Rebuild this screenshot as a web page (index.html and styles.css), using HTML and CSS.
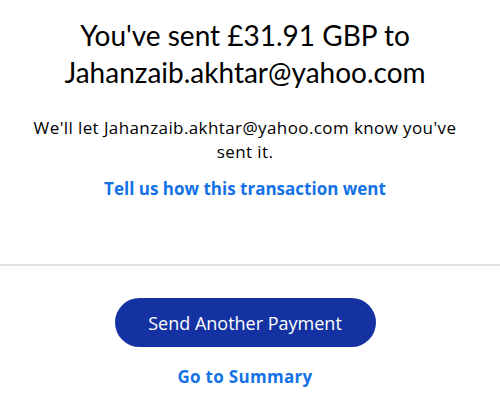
FILE: index.html
```html
<!DOCTYPE html>
<html lang="en">
<head>
<meta charset="utf-8">
<title>Payment sent</title>
<link rel="stylesheet" href="styles.css">
</head>
<body>
<main class="page">
  <section class="confirm">
    <h1 class="title">You've sent £31.91 GBP to Jahanzaib.akhtar@yahoo.com</h1>
    <p class="note">We'll let Jahanzaib.akhtar@yahoo.com know you've sent it.</p>
    <a class="link feedback" href="#">Tell us how this transaction went</a>
  </section>
  <hr class="divider">
  <section class="actions">
    <a class="btn-primary" href="#">Send Another Payment</a>
    <a class="link summary" href="#">Go to Summary</a>
  </section>
</main>
</body>
</html>
```

FILE: styles.css
```css
html, body {
  margin: 0;
  padding: 0;
  background: #ffffff;
}
body {
  font-family: "Open Sans", "Noto Sans", sans-serif;
  color: #000000;
}
.page {
  display: flex;
  flex-direction: column;
}
.confirm {
  display: flex;
  flex-direction: column;
  align-items: center;
  text-align: center;
  padding: 17px 35px 0 25px;
}
.title {
  margin: 0;
  font-family: Lato, "Noto Sans", sans-serif;
  font-size: 28px;
  font-weight: 400;
  line-height: 37px;
  max-width: 440px;
}
.note {
  margin: 25px 0 0;
  font-size: 17px;
  letter-spacing: 0.4px;
  line-height: 24px;
  max-width: 436px;
}
.link {
  color: #1472e6;
  font-weight: 700;
  text-decoration: none;
  font-size: 17px;
}
.feedback {
  margin-top: 13px;
  line-height: 24px;
}
.divider {
  margin: 63px 0 0;
  border: 0;
  height: 2px;
  background: #e3e1dd;
}
.actions {
  display: flex;
  flex-direction: column;
  align-items: center;
  padding: 32px 10px 0 0;
}
.btn-primary {
  display: flex;
  align-items: center;
  justify-content: center;
  width: 261px;
  height: 49px;
  border-radius: 25px;
  background: #1432a2;
  color: #ffffff;
  font-size: 18px;
  text-decoration: none;
}
.summary {
  margin-top: 18px;
  line-height: 24px;
  letter-spacing: 0.3px;
}
```
